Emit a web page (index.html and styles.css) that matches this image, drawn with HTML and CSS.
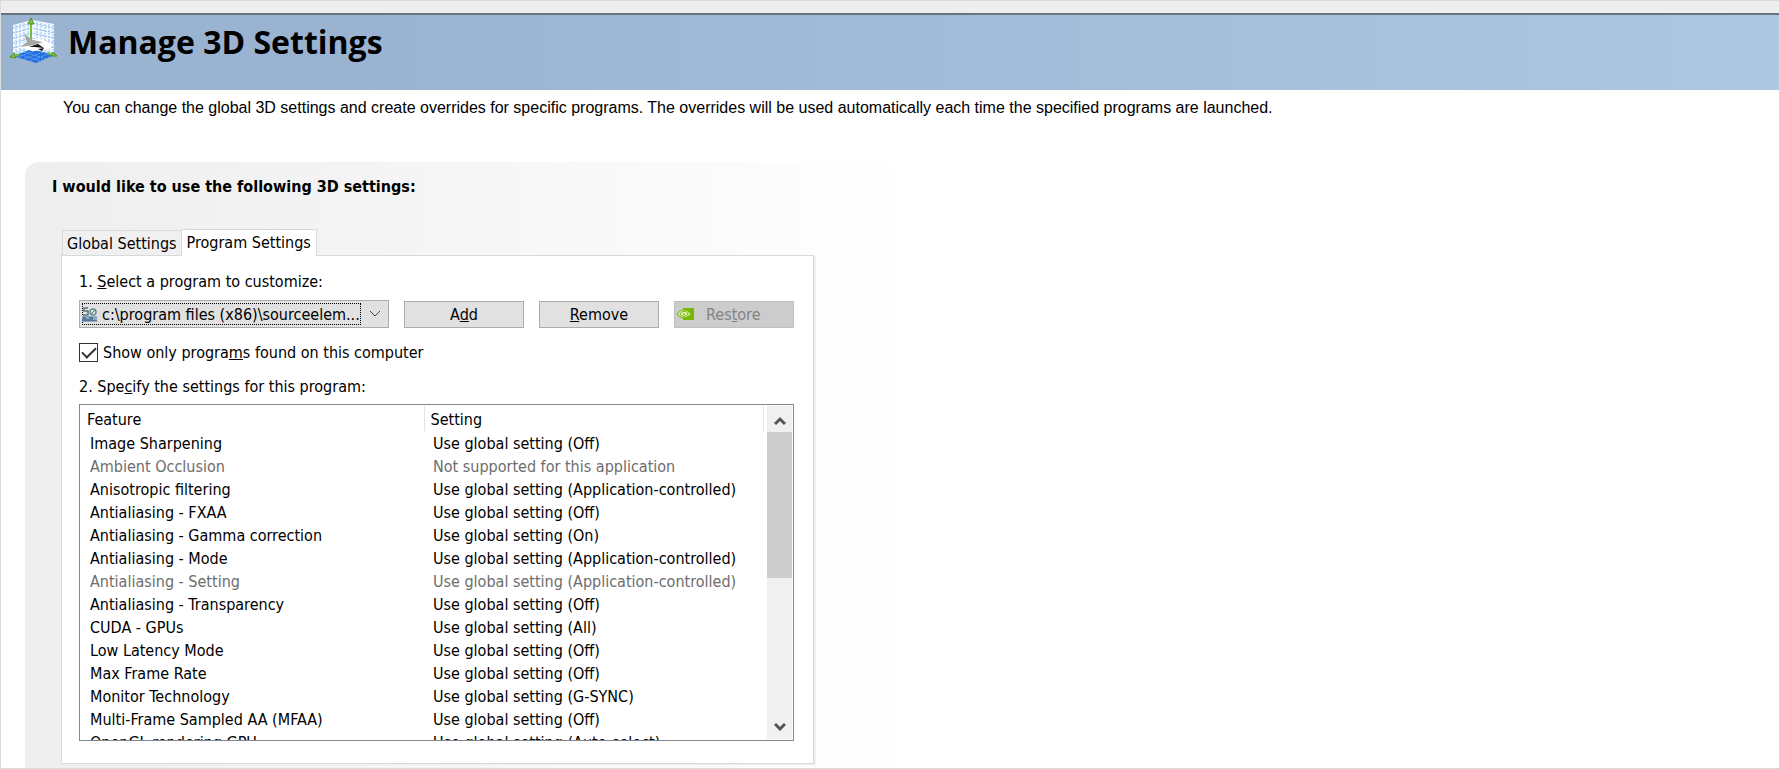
FILE: index.html
```html
<!DOCTYPE html>
<html lang="en">
<head>
    <meta charset="UTF-8">
    <meta name="viewport" content="width=device-width, initial-scale=1.0">
    <title>Manage 3D Settings</title>
    <link rel="stylesheet" href="styles.css">
</head>
<body>

    <header class="page_header">
        <svg class="header_icon" width="48" height="46" viewBox="0 0 48 46">
            <path d="M3 7 L22 2 L22 32 L3 38 Z M22 2 L44 6 L44 38 L22 32 Z" fill="#f4f9ff"/>
            <path d="M6 7v30M10 6v30M14 5v29M18 4v29M27 4v29M31 5v29M35 6v30M39 6v31M43 7v30M3 10l19-5 22 5M3 15l19-5 22 5M3 20l19-5 22 5M3 25l19-5 22 5M3 30l19-5 22 5M3 35l19-6 22 6" fill="none" stroke="#8dbdf0" stroke-dasharray="2 1"/>
            <path d="M3 38 L22 31 L44 37 L26 45 Z" fill="#2470e0"/>
            <path d="M8 39l19-7M14 41l19-7M20 43l18-7M8 36l22 7M14 34l22 7" stroke="#67a5f5" stroke-dasharray="2 1"/>
            <path d="M21 3v20M2 39l8-3M46 38l-9-3" stroke="#76bd3c" stroke-width="2"/>
            <path d="M21 0l-3 6h6zM0 39l4-4 2 5zM47 38l-4-4-2 4z" fill="#83c33f" stroke="#4e8c25" stroke-width="1"/>
            <path d="M9 29 L18 22 L28 20 L43 26 L38 32 L22 33 Z" fill="#fff"/>
            <path d="M10 29 L17 24 L14 16 L23 22 L33 24 L24 27 Z" fill="#a3a6a4"/>
            <path d="M19 29 L28 26 L34 30 L25 29 Z M28 31l6-1-2 3z" fill="#111"/>
        </svg>
        <h1>Manage 3D Settings</h1>
    </header>

    <p class="description">You can change the global 3D settings and create overrides for specific programs. The overrides will be used automatically each time the specified programs are launched.</p>

    <main class="settings_box">
        <h2>I would like to use the following 3D settings:</h2>

        <div class="tabs" role="tablist">
            <button class="tab" role="tab" aria-selected="false">Global Settings</button>
            <button class="tab active" role="tab" aria-selected="true">Program Settings</button>
        </div>

        <div class="tab_panel" role="tabpanel">
            <label for="program">1. <u>S</u>elect a program to customize:</label>

            <div class="program_row">
                <div class="select_wrap">
                    <select id="program">
                        <option>c:\program files (x86)\sourceelem...</option>
                    </select>
                    <span class="focus_rect"></span>
                    <svg class="program_icon" width="15" height="16" viewBox="0 0 15 16">
                        <path d="M0 10h15v6H0z" fill="#8fa9c0"/>
                        <path d="M1 11h3v2h3v-2h4v3h4v1H0z" fill="#52799c"/>
                        <path d="M6 2H2v3h4v4H1" fill="none" stroke="#557b78" stroke-width="1.5"/>
                        <circle cx="11" cy="6" r="3" fill="none" stroke="#63938a" stroke-width="1.5"/>
                        <path d="M9 8l4-4" stroke="#486c69"/>
                    </svg>
                    <svg class="chevron" width="12" height="8" viewBox="0 0 12 8">
                        <path d="M1 1l5 5 5-5" fill="none" stroke="#444"/>
                    </svg>
                </div>
                <button class="action">A<u>d</u>d</button>
                <button class="action"><u>R</u>emove</button>
                <button class="action restore" disabled>
                    <svg width="17" height="12" viewBox="0 0 17 12">
                        <path d="M6 0h11v12H6z" fill="#76b900"/>
                        <path d="M0 6c3-5 10-6 14 0-4 5-11 5-14 0z" fill="#c9e39a" stroke="#76b900"/>
                        <path d="M3 6c2-3 6-4 8 0-2 3-6 3-8 0z" fill="#e6f3cd" stroke="#76b900"/>
                        <circle cx="7" cy="6" r="1" fill="#76b900"/>
                    </svg>
                    <span>Res<u>t</u>ore</span>
                </button>
            </div>

            <div class="check_row">
                <input type="checkbox" id="showOnly" checked>
                <label for="showOnly">Show only progra<u>m</u>s found on this computer</label>
            </div>

            <p class="list_label">2. Spe<u>c</u>ify the settings for this program:</p>

            <div class="feature_list">
                <table>
                    <thead>
                        <tr><th>Feature</th><th>Setting</th></tr>
                    </thead>
                    <tbody>
                        <tr><td>Image Sharpening</td><td>Use global setting (Off)</td></tr>
                        <tr class="unavailable"><td>Ambient Occlusion</td><td>Not supported for this application</td></tr>
                        <tr><td>Anisotropic filtering</td><td>Use global setting (Application-controlled)</td></tr>
                        <tr><td>Antialiasing - FXAA</td><td>Use global setting (Off)</td></tr>
                        <tr><td>Antialiasing - Gamma correction</td><td>Use global setting (On)</td></tr>
                        <tr><td>Antialiasing - Mode</td><td>Use global setting (Application-controlled)</td></tr>
                        <tr class="unavailable"><td>Antialiasing - Setting</td><td>Use global setting (Application-controlled)</td></tr>
                        <tr><td>Antialiasing - Transparency</td><td>Use global setting (Off)</td></tr>
                        <tr><td>CUDA - GPUs</td><td>Use global setting (All)</td></tr>
                        <tr><td>Low Latency Mode</td><td>Use global setting (Off)</td></tr>
                        <tr><td>Max Frame Rate</td><td>Use global setting (Off)</td></tr>
                        <tr><td>Monitor Technology</td><td>Use global setting (G-SYNC)</td></tr>
                        <tr><td>Multi-Frame Sampled AA (MFAA)</td><td>Use global setting (Off)</td></tr>
                        <tr><td>OpenGL rendering GPU</td><td>Use global setting (Auto-select)</td></tr>
                    </tbody>
                </table>
                <div class="scrollbar">
                    <button aria-label="Scroll up">
                        <svg width="12" height="9" viewBox="0 0 12 9"><path d="M1 8l5-5 5 5" fill="none" stroke="#555" stroke-width="3"/></svg>
                    </button>
                    <div class="thumb"></div>
                    <button aria-label="Scroll down">
                        <svg width="12" height="9" viewBox="0 0 12 9"><path d="M1 1l5 5 5-5" fill="none" stroke="#555" stroke-width="3"/></svg>
                    </button>
                </div>
            </div>
        </div>
    </main>

</body>
</html>
```
FILE: styles.css
```css
* {
    box-sizing: border-box;
}

body {
    margin: 0;
    height: 100vh;
    overflow: hidden;
    display: flex;
    flex-direction: column;
    border: 1px solid #dcdcdc;
    background-color: #fff;
    color: #000;
    font-family: "DejaVu Sans Condensed", "Noto Sans", sans-serif;
    font-size: 16px;
    line-height: 23px;
}

button,
select {
    font: inherit;
    color: inherit;
    padding: 0;
    margin: 0;
}

/* header */
.page_header {
    flex: none;
    display: flex;
    align-items: flex-start;
    gap: 10px;
    height: 89px;
    padding: 5px 9px;
    border-top: 12px solid #eee;
    background: linear-gradient(#6b737c, #6b737c) top / 100% 2px no-repeat,
        linear-gradient(to right, #9ab3d1 20%, #adc7e3);
}

.header_icon {
    flex: none;
}

h1 {
    margin: 4px 0 0;
    font-family: "Trebuchet MS", "Open Sans", sans-serif;
    font-size: 32px;
    font-weight: 700;
    line-height: 40px;
}

.description {
    margin: 6px 0 43px 62px;
    font-family: "Liberation Sans", Arial, sans-serif;
    font-size: 16px;
}

/* settings */
.settings_box {
    flex: 1;
    width: 890px;
    margin-left: 24px;
    padding: 13px 36px 0;
    border-top-left-radius: 14px;
    background: linear-gradient(to right, #eee, #f6f6f6 50%, #fff);
}

h2 {
    margin: 0 0 31px -9px;
    font-size: 16px;
    font-weight: 700;
}

.tabs {
    display: flex;
    align-items: flex-end;
    padding-left: 1px;
}

.tab {
    height: 25px;
    padding: 0 4px;
    border: 1px solid #d9d9d9;
    border-bottom: none;
    background-color: #f0f0f0;
}

.tab.active {
    position: relative;
    height: 27px;
    padding: 0 5px 2px;
    margin-bottom: -1px;
    border-left: none;
    background-color: #fff;
}

.tab_panel {
    width: 753px;
    padding: 14px 19px 22px 17px;
    border: 1px solid #d9d9d9;
    box-shadow: 2px 1px #f0f0f0;
    background-color: #fff;
}

.program_row {
    display: flex;
    align-items: center;
    gap: 15px;
    margin: 7px 0 13px;
}

.select_wrap {
    position: relative;
    flex: 1;
}

select {
    appearance: none;
    display: block;
    width: 100%;
    height: 28px;
    padding-left: 22px;
    border: 1px solid #adadad;
    border-radius: 0;
    background-color: #e1e1e1;
}

.focus_rect {
    position: absolute;
    inset: 3px 28px 3px 3px;
    border: 1px dotted #000;
    pointer-events: none;
}

.program_icon {
    position: absolute;
    top: 6px;
    left: 3px;
}

.chevron {
    position: absolute;
    top: 10px;
    right: 8px;
}

.action {
    width: 120px;
    height: 27px;
    border: 1px solid #adadad;
    background-color: #e1e1e1;
}

.restore {
    display: flex;
    align-items: center;
    gap: 12px;
    padding-left: 2px;
    border-color: #bfbfbf;
    background-color: #ccc;
    color: #838383;
}

.check_row {
    display: flex;
    align-items: center;
    gap: 5px;
}

input[type="checkbox"] {
    appearance: none;
    width: 19px;
    height: 19px;
    margin: 0;
    border: 1px solid #333;
    display: grid;
    place-items: center;
}

input[type="checkbox"]:checked::before {
    content: "";
    width: 12px;
    height: 6px;
    margin-bottom: 4px;
    border: solid #333;
    border-width: 0 0 2px 2px;
    transform: rotate(-45deg);
}

.list_label {
    margin: 11px 0 6px;
}

/* feature list */
.feature_list {
    display: flex;
    height: 337px;
    padding: 1px;
    border: 1px solid #828790;
    overflow: hidden;
}

table {
    flex: 1;
    align-self: flex-start;
    table-layout: fixed;
    border-collapse: collapse;
}

th,
td {
    height: 23px;
    padding: 0 0 0 9px;
    text-align: left;
    font-weight: 400;
    white-space: nowrap;
}

th {
    height: 26px;
    padding-left: 6px;
    border-right: 1px solid #e5e5e5;
}

th:first-child {
    width: 343px;
}

.unavailable {
    color: #6d6d6d;
}

.scrollbar {
    display: flex;
    flex-direction: column;
    width: 25px;
    margin-left: 3px;
    background-color: #f0f0f0;
}

.scrollbar button {
    height: 26px;
    border: none;
    background: none;
}

.thumb {
    height: 146px;
    margin-bottom: auto;
    background-color: #cdcdcd;
}
```
